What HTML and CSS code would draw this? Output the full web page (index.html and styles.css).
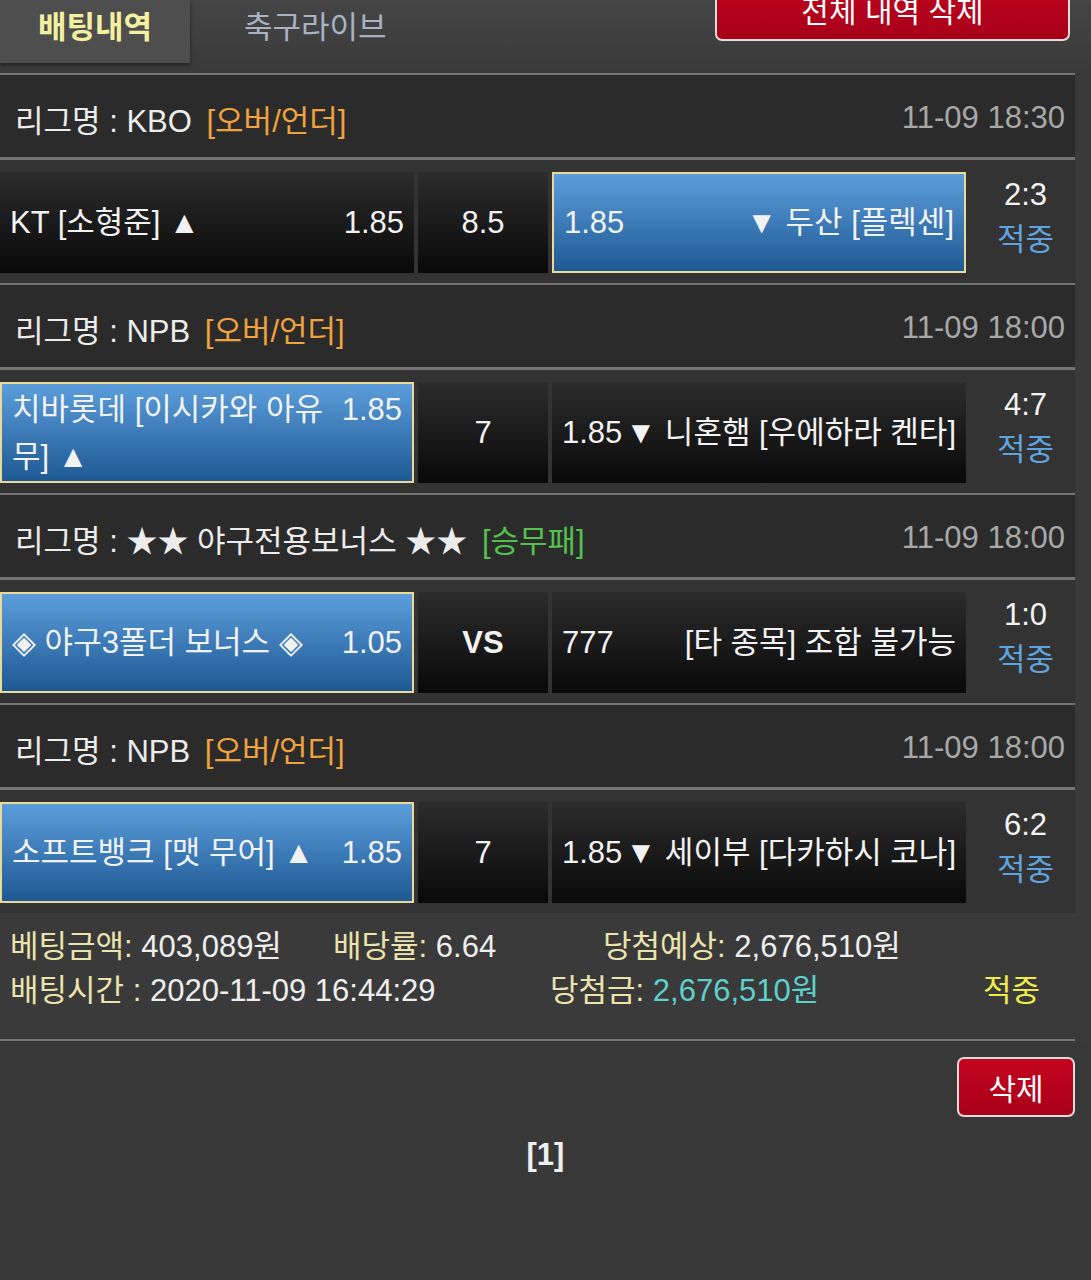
FILE: index.html
```html
<!DOCTYPE html>
<html>
<head>
    <meta charset="utf-8">
    <title>배팅내역</title>
    <link rel="stylesheet" href="styles.css">
</head>
<body>
    <div class="top-bar">
        <div class="tab active">배팅내역</div>
        <div class="tab">축구라이브</div>
        <button class="btn-red btn-all">전체 내역 삭제</button>
    </div>

    <div class="bet-list">
        <!-- KBO -->
        <div class="league">
            <div class="league-name">리그명 : KBO <span class="type ou">[오버/언더]</span></div>
            <div class="league-time">11-09 18:30</div>
        </div>
        <div class="match">
            <div class="cell home"><div><span class="odds">1.85</span>KT [소형준] ▲</div></div>
            <div class="cell mid">8.5</div>
            <div class="cell away picked"><div><span class="odds">1.85</span>▼ 두산 [플렉센]</div></div>
            <div class="score">2:3<br><span class="hit">적중</span></div>
        </div>

        <!-- NPB -->
        <div class="league">
            <div class="league-name">리그명 : NPB <span class="type ou">[오버/언더]</span></div>
            <div class="league-time">11-09 18:00</div>
        </div>
        <div class="match">
            <div class="cell home picked"><div><span class="odds">1.85</span>치바롯데 [이시카와 아유무] ▲</div></div>
            <div class="cell mid">7</div>
            <div class="cell away"><div><span class="odds">1.85</span>▼ 니혼햄 [우에하라 켄타]</div></div>
            <div class="score">4:7<br><span class="hit">적중</span></div>
        </div>

        <!-- bonus -->
        <div class="league">
            <div class="league-name">리그명 : ★★ 야구전용보너스 ★★ <span class="type wdl">[승무패]</span></div>
            <div class="league-time">11-09 18:00</div>
        </div>
        <div class="match">
            <div class="cell home picked"><div><span class="odds">1.05</span>◈ 야구3폴더 보너스 ◈</div></div>
            <div class="cell mid vs">VS</div>
            <div class="cell away"><div><span class="odds">777</span>[타 종목] 조합 불가능</div></div>
            <div class="score">1:0<br><span class="hit">적중</span></div>
        </div>

        <!-- NPB -->
        <div class="league">
            <div class="league-name">리그명 : NPB <span class="type ou">[오버/언더]</span></div>
            <div class="league-time">11-09 18:00</div>
        </div>
        <div class="match">
            <div class="cell home picked"><div><span class="odds">1.85</span>소프트뱅크 [맷 무어] ▲</div></div>
            <div class="cell mid">7</div>
            <div class="cell away"><div><span class="odds">1.85</span>▼ 세이부 [다카하시 코나]</div></div>
            <div class="score">6:2<br><span class="hit">적중</span></div>
        </div>
    </div>

    <div class="summary">
        <div class="sum-row">
            <span class="s1"><span class="label">베팅금액:</span> 403,089원</span>
            <span class="s2"><span class="label">배당률:</span> 6.64</span>
            <span><span class="label">당첨예상:</span> 2,676,510원</span>
        </div>
        <div class="sum-row">
            <span class="s3"><span class="label">배팅시간 :</span> 2020-11-09 16:44:29</span>
            <span class="s4"><span class="label">당첨금:</span> <span class="win">2,676,510원</span></span>
            <span class="result">적중</span>
        </div>
    </div>

    <div class="bottom">
        <div class="controls">
            <button class="btn-red btn-del">삭제</button>
        </div>
        <div class="paging">[1]</div>
    </div>
</body>
</html>
```

FILE: styles.css
```css
body {
    margin: 0;
    background-color: #3a3a3a;
    font-family: "Liberation Sans", "Noto Sans CJK KR", sans-serif;
    font-size: 31px;
    color: #eee;
    overflow: hidden;
}
.top-bar {
    display: flex;
    align-items: flex-start;
    height: 73px;
    background: linear-gradient(#454545, #3a3a3a);
}
.tab {
    height: 63px;
    line-height: 56px;
    font-size: 31px;
    color: #a9b1c4;
    padding: 0 24px 0 54px;
}
.tab.active {
    width: 190px;
    box-sizing: border-box;
    padding: 0;
    text-align: center;
    background-color: #4e4e4e;
    box-shadow: 0 2px 4px rgba(0, 0, 0, 0.5);
    color: #f3f1a0;
    font-weight: bold;
}
.btn-red {
    background: linear-gradient(#c4061e, #a8001a);
    color: #fff;
    border: 2px solid #e2dcdc;
    border-radius: 7px;
    font-family: inherit;
    font-size: 30px;
    cursor: pointer;
}
.btn-all {
    margin-left: auto;
    margin-right: 21px;
    margin-top: -30px;
    width: 355px;
    height: 71px;
    padding-top: 8px;
}
.bet-list {
    margin-right: 16px;
}
.league {
    display: flex;
    justify-content: space-between;
    align-items: center;
    height: 78px;
    padding: 4px 10px 0 15px;
    background-color: #2b2b2b;
    border-top: 2px solid #747474;
    border-bottom: 3px solid #747474;
    color: #ececec;
}
.type {
    margin-left: 6px;
}
.ou {
    color: #efa23e;
}
.wdl {
    color: #54c14e;
}
.league-time {
    color: #a8a8a8;
}
.match {
    display: grid;
    grid-template-columns: 414px 130px 414px 1fr;
    column-gap: 4px;
    padding: 12px 0 10px;
    background-color: #333;
}
.cell {
    height: 101px;
    box-sizing: border-box;
    padding: 0 10px;
    background: linear-gradient(#2c2c2c, #090909);
    color: #f2f2f2;
    line-height: 47px;
    display: flex;
    flex-direction: column;
    justify-content: center;
}
.cell.picked {
    background: linear-gradient(#5b9ddb, #1e5993);
    border: 2px solid #ead999;
}
.home .odds {
    float: right;
}
.home.picked {
    padding-left: 10px;
}
.away {
    text-align: right;
}
.away .odds {
    float: left;
}
.mid {
    text-align: center;
    align-items: center;
}
.vs {
    font-weight: bold;
}
.score {
    text-align: center;
    line-height: 45px;
    padding-left: 6px;
    color: #f2f2f2;
}
.hit {
    color: #5fa4df;
}
.summary {
    padding: 12px 0 26px 10px;
    border-bottom: 2px solid #747474;
    margin-right: 16px;
    line-height: 44px;
}
.sum-row {
    display: flex;
}
.label {
    color: #ebe3ad;
}
.s1 {
    width: 323px;
}
.s2 {
    width: 270px;
}
.s3 {
    width: 540px;
}
.s4 {
    width: 433px;
}
.win {
    color: #5ed0cc;
}
.result {
    color: #f0ec4a;
}
.bottom {
    background-color: #383838;
    height: 240px;
}
.controls {
    display: flex;
    justify-content: flex-end;
    padding: 16px 16px 0 0;
}
.btn-del {
    width: 118px;
    height: 60px;
}
.paging {
    text-align: center;
    font-weight: bold;
    margin-top: 20px;
}
```
